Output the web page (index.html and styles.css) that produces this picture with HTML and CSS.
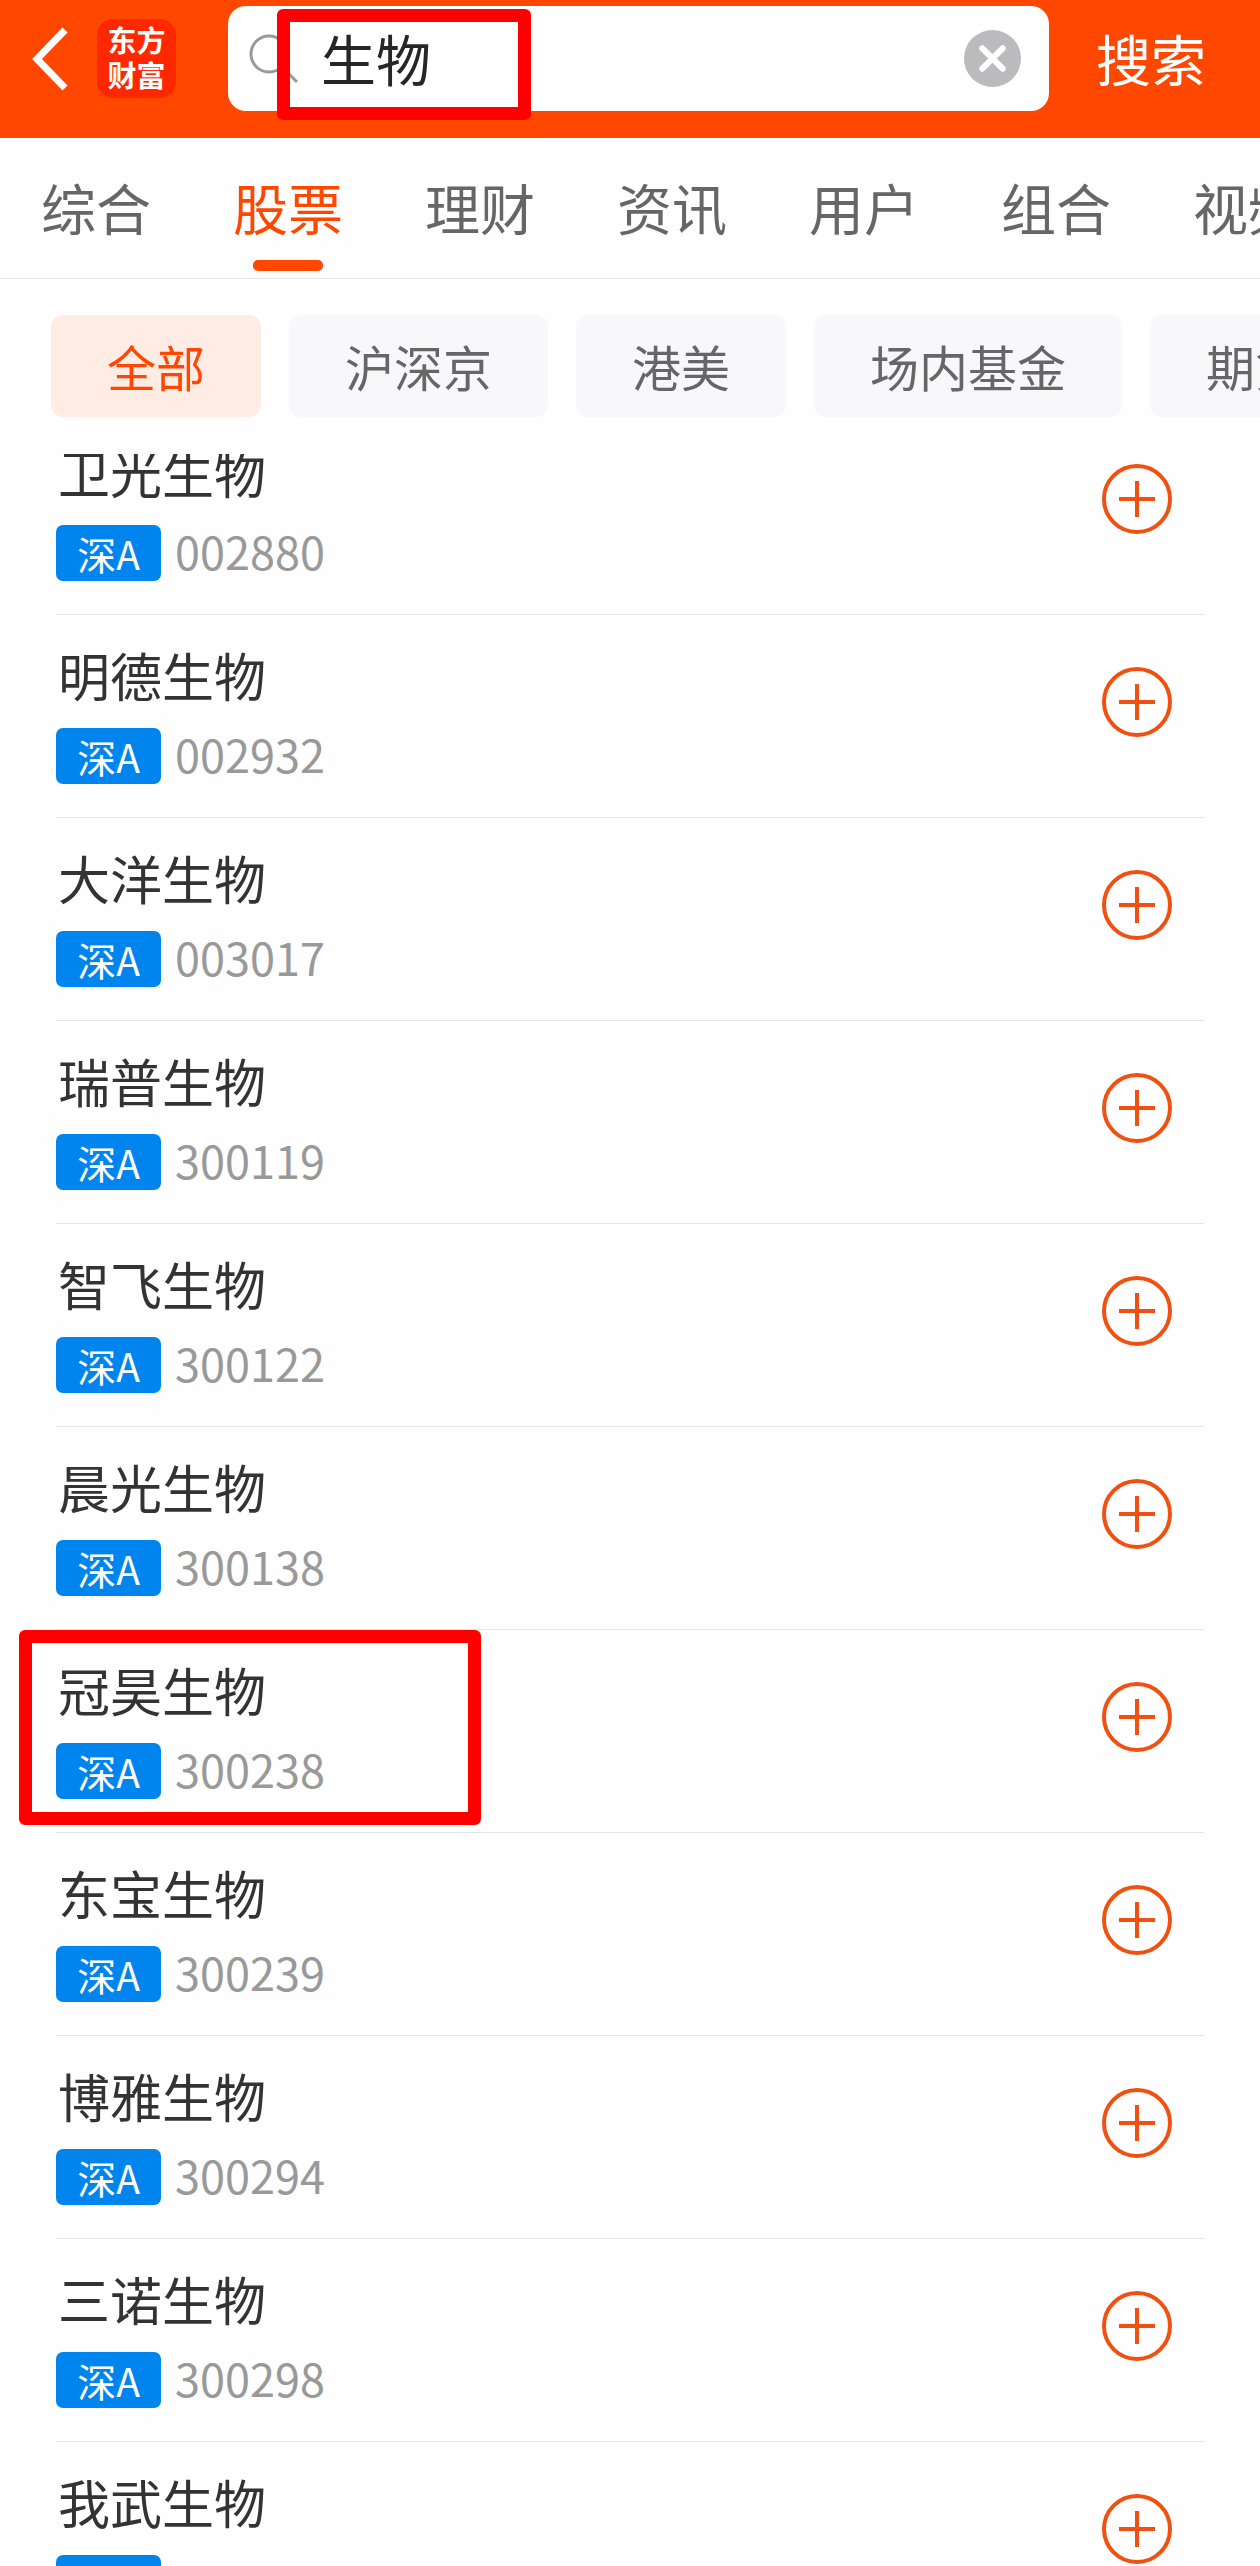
FILE: index.html
```html
<!DOCTYPE html>
<html lang="zh-CN">
<head>
    <meta charset="UTF-8">
    <meta name="viewport" content="width=device-width, initial-scale=1.0">
    <title>搜索 - 东方财富</title>
    <link rel="stylesheet" href="styles.css">
</head>
<body>
    <svg class="sprite" aria-hidden="true">
        <symbol id="plus" viewBox="0 0 70 70">
            <circle cx="35" cy="35" r="33" fill="none" stroke="currentColor" stroke-width="4"/>
            <path d="M35 17V53M17 35H53" fill="none" stroke="currentColor" stroke-width="4"/>
        </symbol>
    </svg>

    <header class="header">
        <button type="button" class="back" aria-label="返回">
            <svg width="36" height="64" viewBox="0 0 36 64">
                <path d="M33 3L5 32L33 61" fill="none" stroke="#fff" stroke-width="7"/>
            </svg>
        </button>
        <div class="logo">东方<br>财富</div>
        <form class="search">
            <svg class="search-icon" width="50" height="50" viewBox="0 0 50 50">
                <circle cx="20" cy="20" r="18" fill="none" stroke="#999" stroke-width="3"/>
                <path d="M33 33L48 48" stroke="#999" stroke-width="3"/>
            </svg>
            <input type="text" class="search-input" value="生物" aria-label="搜索">
            <button type="button" class="clear" aria-label="清除">
                <svg width="57" height="57" viewBox="0 0 56 56">
                    <circle cx="28" cy="28" r="28" fill="#bbbbbd"/>
                    <path d="M18 18L38 38M38 18L18 38" stroke="#fff" stroke-width="6" stroke-linecap="round"/>
                </svg>
            </button>
            <span class="mark mark-search"></span>
        </form>
        <button type="button" class="submit">搜索</button>
    </header>

    <nav class="tabs">
        <a href="#">综合</a>
        <a href="#" class="active">股票</a>
        <a href="#">理财</a>
        <a href="#">资讯</a>
        <a href="#">用户</a>
        <a href="#">组合</a>
        <a href="#">视频</a>
    </nav>

    <div class="filters">
        <button type="button" class="active">全部</button>
        <button type="button">沪深京</button>
        <button type="button">港美</button>
        <button type="button">场内基金</button>
        <button type="button">期货</button>
    </div>

    <ul class="list">
        <li>
            <div class="stock">
                <h2>卫光生物</h2>
                <p><span class="tag">深A</span><span class="code">002880</span></p>
            </div>
            <button type="button" class="add" aria-label="添加自选"><svg><use href="#plus"/></svg></button>
        </li>
        <li>
            <div class="stock">
                <h2>明德生物</h2>
                <p><span class="tag">深A</span><span class="code">002932</span></p>
            </div>
            <button type="button" class="add" aria-label="添加自选"><svg><use href="#plus"/></svg></button>
        </li>
        <li>
            <div class="stock">
                <h2>大洋生物</h2>
                <p><span class="tag">深A</span><span class="code">003017</span></p>
            </div>
            <button type="button" class="add" aria-label="添加自选"><svg><use href="#plus"/></svg></button>
        </li>
        <li>
            <div class="stock">
                <h2>瑞普生物</h2>
                <p><span class="tag">深A</span><span class="code">300119</span></p>
            </div>
            <button type="button" class="add" aria-label="添加自选"><svg><use href="#plus"/></svg></button>
        </li>
        <li>
            <div class="stock">
                <h2>智飞生物</h2>
                <p><span class="tag">深A</span><span class="code">300122</span></p>
            </div>
            <button type="button" class="add" aria-label="添加自选"><svg><use href="#plus"/></svg></button>
        </li>
        <li>
            <div class="stock">
                <h2>晨光生物</h2>
                <p><span class="tag">深A</span><span class="code">300138</span></p>
            </div>
            <button type="button" class="add" aria-label="添加自选"><svg><use href="#plus"/></svg></button>
        </li>
        <li>
            <div class="stock">
                <h2>冠昊生物</h2>
                <p><span class="tag">深A</span><span class="code">300238</span></p>
            </div>
            <button type="button" class="add" aria-label="添加自选"><svg><use href="#plus"/></svg></button>
            <span class="mark mark-row"></span>
        </li>
        <li>
            <div class="stock">
                <h2>东宝生物</h2>
                <p><span class="tag">深A</span><span class="code">300239</span></p>
            </div>
            <button type="button" class="add" aria-label="添加自选"><svg><use href="#plus"/></svg></button>
        </li>
        <li>
            <div class="stock">
                <h2>博雅生物</h2>
                <p><span class="tag">深A</span><span class="code">300294</span></p>
            </div>
            <button type="button" class="add" aria-label="添加自选"><svg><use href="#plus"/></svg></button>
        </li>
        <li>
            <div class="stock">
                <h2>三诺生物</h2>
                <p><span class="tag">深A</span><span class="code">300298</span></p>
            </div>
            <button type="button" class="add" aria-label="添加自选"><svg><use href="#plus"/></svg></button>
        </li>
        <li>
            <div class="stock">
                <h2>我武生物</h2>
                <p><span class="tag">深A</span><span class="code">300357</span></p>
            </div>
            <button type="button" class="add" aria-label="添加自选"><svg><use href="#plus"/></svg></button>
        </li>
    </ul>
</body>
</html>
```
FILE: styles.css
```css
* { box-sizing: border-box; margin: 0; padding: 0; }
body { display: flex; flex-direction: column; height: 100vh; overflow: hidden; background: #fefefe; color: #333; font-family: "Noto Sans CJK SC", sans-serif; }
button { border: none; background: none; font-family: inherit; cursor: pointer; }
a { text-decoration: none; }
svg { display: block; }
.sprite { position: absolute; width: 0; height: 0; }

/* header */
.header { display: flex; align-items: center; flex: none; padding: 6px 54px 27px 32px; background: #ff4700; }
.logo { width: 79px; height: 79px; margin: 0 52px 0 29px; padding-top: 3px; border-radius: 16px; background: #ff2800; color: #fff; font-size: 29px; font-weight: 700; line-height: 35px; text-align: center; }
.search { position: relative; display: flex; align-items: center; flex: 1; min-width: 0; height: 105px; padding: 0 28px 0 21px; border-radius: 18px; background: #fff; }
.search-input { flex: 1; min-width: 0; height: 80px; margin-left: 22px; padding-bottom: 4px; border: none; outline: none; background: transparent; color: #262626; font-family: inherit; font-size: 55px; }
.submit { margin-left: 47px; padding-bottom: 4px; color: #fff; font-size: 55px; line-height: 80px; }

/* tabs */
.tabs { display: flex; flex: none; gap: 82px; height: 141px; padding-left: 41px; border-bottom: 1px solid #e5e5e5; overflow: hidden; }
.tabs a { position: relative; flex: none; color: #666; font-size: 55px; line-height: 136px; }
.tabs .active { color: #ff4700; }
.tabs .active::after { content: ""; position: absolute; left: 20px; bottom: 7px; width: 70px; height: 11px; border-radius: 5px; background: #ff4700; }

/* filters */
.filters { display: flex; flex: none; gap: 28px; padding: 36px 0 37px 51px; overflow: hidden; }
.filters button { flex: none; height: 102px; padding: 0 56px; border-radius: 12px; background: #f8f8fa; color: #666; font-size: 49px; line-height: 100px; }
.filters .active { background: #ffece4; color: #ff4700; }

/* results, scrolled a little under the filters */
.list { flex: 1; min-height: 0; padding: 0 56px; overflow: hidden; list-style: none; }
.list li { position: relative; display: flex; justify-content: space-between; height: 203px; border-bottom: 1px solid #e5e5e5; }
.list li:first-child { margin-top: -42px; }
.stock { padding-top: 30px; }
.stock h2 { padding-left: 2px; font-size: 52px; font-weight: 400; line-height: 60px; }
.stock p { display: flex; align-items: center; margin-top: 23px; }
.tag { width: 105px; height: 56px; border-radius: 7px; background: #0084ee; color: #fff; font-size: 39px; line-height: 56px; text-align: center; }
.code { margin-left: 14px; padding-bottom: 4px; color: #999; font-size: 45px; line-height: 52px; }
.add { align-self: flex-start; margin: 52px 32px 0 0; color: #f05010; }
.add svg { width: 70px; height: 70px; }

/* red marker frames */
.mark { position: absolute; border: 13px solid #f00; border-radius: 6px; pointer-events: none; }
.mark-search { left: 49px; top: 3px; width: 254px; height: 111px; }
.mark-row { left: -37px; top: 0; width: 462px; height: 195px; }
```
